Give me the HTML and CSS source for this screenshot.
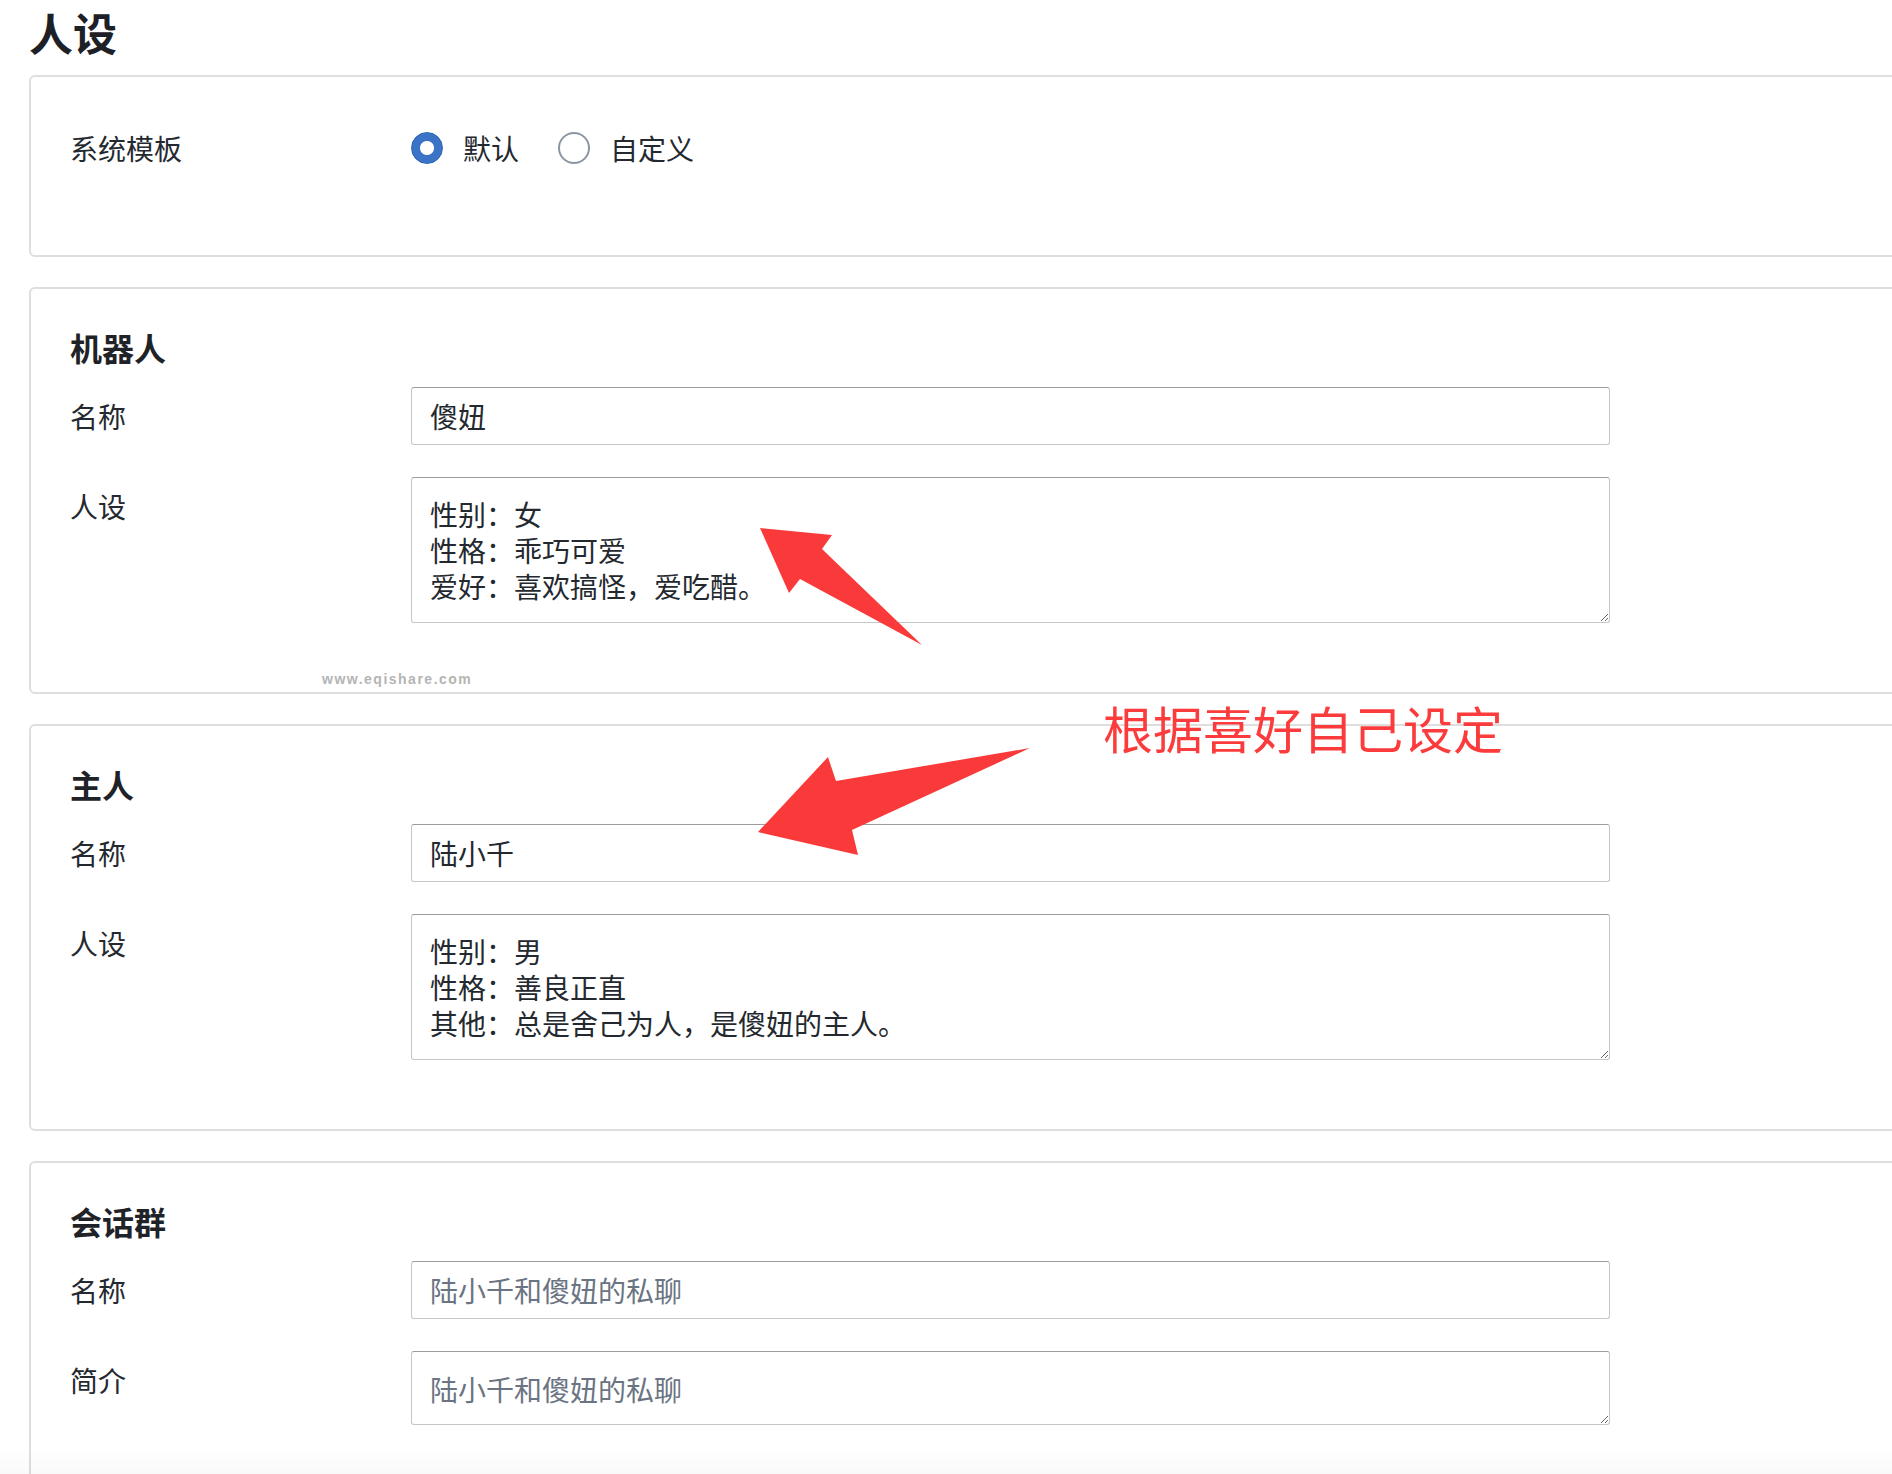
FILE: index.html
```html
<!DOCTYPE html>
<html lang="zh-CN">
<head>
<meta charset="utf-8">
<title>人设</title>
<link rel="stylesheet" href="styles.css">
</head>
<body>
<div class="page">
  <h1 class="title">人设</h1>

  <section class="card card-template">
    <div class="row row-center">
      <div class="label">系统模板</div>
      <div class="radios">
        <label class="radio"><span class="dot dot-on"></span><span class="radio-text">默认</span></label>
        <label class="radio"><span class="dot"></span><span class="radio-text">自定义</span></label>
      </div>
    </div>
  </section>

  <section class="card">
    <h2 class="card-title">机器人</h2>
    <div class="row">
      <div class="label">名称</div>
      <input class="field" type="text" value="傻妞">
    </div>
    <div class="row">
      <div class="label">人设</div>
      <textarea class="field area">性别：女
性格：乖巧可爱
爱好：喜欢搞怪，爱吃醋。</textarea>
    </div>
  </section>

  <section class="card">
    <h2 class="card-title">主人</h2>
    <div class="row">
      <div class="label">名称</div>
      <input class="field" type="text" value="陆小千">
    </div>
    <div class="row">
      <div class="label">人设</div>
      <textarea class="field area">性别：男
性格：善良正直
其他：总是舍己为人，是傻妞的主人。</textarea>
    </div>
  </section>

  <section class="card">
    <h2 class="card-title">会话群</h2>
    <div class="row">
      <div class="label">名称</div>
      <input class="field" type="text" placeholder="陆小千和傻妞的私聊">
    </div>
    <div class="row">
      <div class="label">简介</div>
      <textarea class="field area area-short" placeholder="陆小千和傻妞的私聊"></textarea>
    </div>
  </section>
</div>

<div class="overlay">
  <svg class="arrows" width="1892" height="1474" viewBox="0 0 1892 1474" xmlns="http://www.w3.org/2000/svg">
    <polygon points="760,528 832,535 822,549 922,645 800,579 789,593" fill="#fa3a3a"/>
    <polygon points="758,832 828,757 836,781 1030,748 852,830 858,855" fill="#fa3a3a"/>
  </svg>
  <div class="note">根据喜好自己设定</div>
  <div class="watermark">www.eqishare.com</div>
  <div class="fade"></div>
</div>
</body>
</html>
```

FILE: styles.css
```css
html, body {
  margin: 0;
  padding: 0;
  overflow: hidden;
  background: #ffffff;
}

body {
  font-family: "Noto Sans CJK SC", "Noto Sans", sans-serif;
  color: #24292f;
  width: 1892px;
  height: 1474px;
  position: relative;
}

.page {
  padding: 0 0 0 29px;
}

.title {
  margin: 6px 0 17px 0;
  font-size: 44px;
  line-height: 52px;
  font-weight: 700;
  color: #1d2127;
}

.card {
  width: 1900px;
  box-sizing: border-box;
  border: 2px solid #dedede;
  border-radius: 6px;
  padding: 40px 0 69px 39px;
  margin-bottom: 30px;
}

.card-template {
  padding-top: 42px;
  padding-bottom: 78px;
}

.card-title {
  margin: 0 0 22px 0;
  font-size: 32px;
  line-height: 36px;
  font-weight: 700;
  color: #1f2328;
}

.row {
  display: flex;
  align-items: flex-start;
  margin-bottom: 32px;
}

.row:last-child {
  margin-bottom: 0;
}

.row-center {
  align-items: center;
  height: 58px;
}

.label {
  width: 341px;
  flex: none;
  font-size: 28px;
  line-height: 36px;
  padding-top: 11px;
  color: #24292f;
}

.row-center .label {
  padding-top: 0;
}

.radios {
  display: flex;
  align-items: center;
}

.radio {
  display: flex;
  align-items: center;
  margin-right: 39px;
}

.dot {
  width: 32px;
  height: 32px;
  box-sizing: border-box;
  border-radius: 50%;
  border: 2px solid #8c95a3;
  background: #ffffff;
  margin-right: 20px;
  flex: none;
}

.dot-on {
  border: 1px solid #2f64b3;
  background: radial-gradient(circle, #ffffff 0, #ffffff 6.5px, #3b74c7 7.5px);
}

.radio-text {
  font-size: 28px;
  line-height: 36px;
  color: #24292f;
}

.field {
  width: 1199px;
  flex: none;
  box-sizing: border-box;
  height: 58px;
  margin: 0;
  padding: 0 19px 0 18px;
  border: 1px solid #c6c6c6;
  border-top-color: #9c9c9c;
  border-radius: 3px;
  font-family: "Noto Sans CJK SC", "Noto Sans", sans-serif;
  font-size: 28px;
  color: #24292f;
  background: #ffffff;
  outline: none;
}

.field::placeholder {
  color: #6b7482;
  opacity: 1;
}

.area {
  height: 146px;
  padding: 18px 19px 18px 18px;
  line-height: 36px;
  overflow: hidden;
  resize: vertical;
  display: block;
}

.area-short {
  height: 74px;
  padding-top: 19px;
}

.overlay {
  position: absolute;
  left: 0;
  top: 0;
  width: 1892px;
  height: 1474px;
  pointer-events: none;
}

.arrows {
  position: absolute;
  left: 0;
  top: 0;
}

.note {
  position: absolute;
  left: 1103px;
  top: 702px;
  font-size: 50px;
  line-height: 50px;
  color: #fc3c3c;
  white-space: nowrap;
}

.watermark {
  position: absolute;
  left: 322px;
  top: 670px;
  font-family: "Liberation Sans", Arial, sans-serif;
  font-weight: 700;
  font-size: 14px;
  line-height: 18px;
  letter-spacing: 1.5px;
  color: #b4b4b4;
}

.fade {
  position: absolute;
  left: 0;
  bottom: 0;
  width: 1892px;
  height: 26px;
  background: linear-gradient(to bottom, rgba(0, 0, 0, 0), rgba(0, 0, 0, 0.025));
}
```
